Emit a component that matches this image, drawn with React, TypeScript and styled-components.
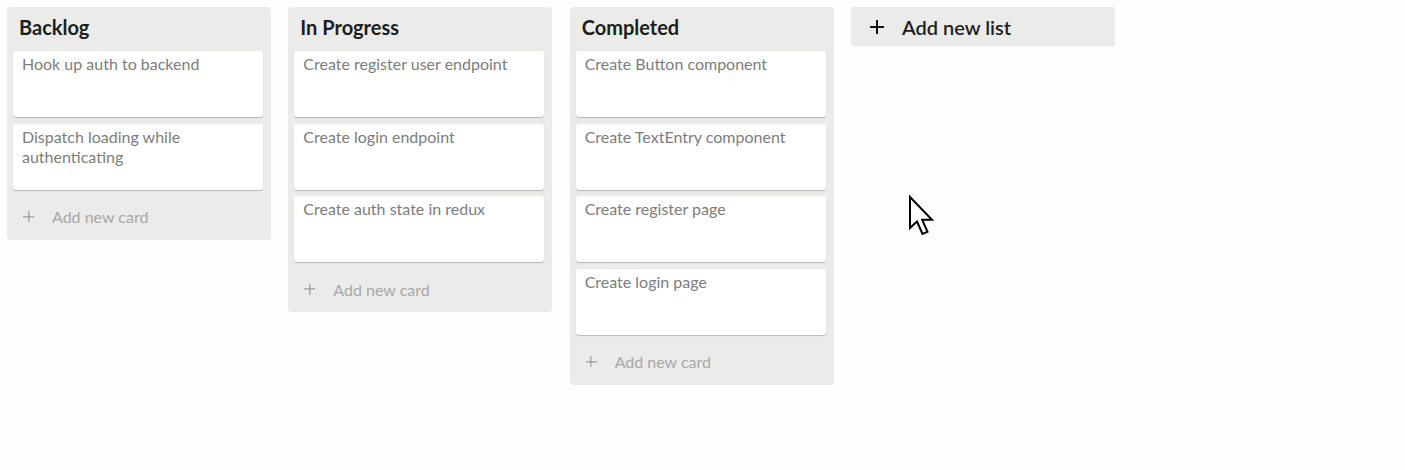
import React from "react";
import styled, { createGlobalStyle } from "styled-components";

const Global = createGlobalStyle`
  html, body { margin: 0; padding: 0; background: #fdfdfb; }
  body { font-family: "Source Sans Pro", Lato, "Noto Sans", sans-serif; }
`;

const Board = styled.div`
  position: relative;
  display: flex;
  align-items: flex-start;
  gap: 17.33px;
  padding: 7px;
  height: 456px;
`;

const List = styled.section`
  width: 264px;
  flex: 0 0 264px;
  background: #ebebe9;
  border-radius: 4px;
  padding: 0 8px 0 6px;
  box-sizing: border-box;
`;

const ListTitle = styled.h2`
  margin: 0;
  height: 44px;
  padding: 8px 0 0 6px;
  box-sizing: border-box;
  font-size: 20px;
  font-weight: 700;
  line-height: 24px;
  color: #1e1e1e;
`;

const Cards = styled.div`
  display: flex;
  flex-direction: column;
  gap: 6.6px;
`;

const Card = styled.div`
  height: 66px;
  box-sizing: border-box;
  background: #ffffff;
  border-radius: 3px;
  box-shadow: 0 1px 1px rgba(0, 0, 0, 0.22);
  padding: 3px 9px;
  font-size: 16px;
  line-height: 20px;
  color: #7d7d7d;
`;

const AddCard = styled.div`
  height: 50px;
  display: flex;
  align-items: center;
  padding: 4px 0 0 10px;
  box-sizing: border-box;
  font-size: 16px;
  color: #a8a8a6;
`;

const Plus = styled.span<{ $size: number; $color: string; $thick: number }>`
  display: inline-block;
  width: ${(p) => p.$size}px;
  height: ${(p) => p.$size}px;
  position: relative;
  margin-right: 18px;
  &::before, &::after {
    content: "";
    position: absolute;
    background: ${(p) => p.$color};
  }
  &::before { left: 0; right: 0; top: 50%; height: ${(p) => p.$thick}px; transform: translateY(-50%); }
  &::after { top: 0; bottom: 0; left: 50%; width: ${(p) => p.$thick}px; transform: translateX(-50%); }
`;

const AddList = styled.div`
  width: 264px;
  flex: 0 0 264px;
  height: 39px;
  box-sizing: border-box;
  background: #ebebe9;
  border-radius: 3px 0 0 3px;
  display: flex;
  align-items: center;
  padding: 0 0 0 19px;
  font-size: 20px;
  font-weight: 600;
  color: #1e1e1e;
`;

const Cursor = styled.svg`
  position: absolute;
  left: 907px;
  top: 194px;
`;

const data = [
  { title: "Backlog", cards: ["Hook up auth to backend", "Dispatch loading while authenticating"] },
  { title: "In Progress", cards: ["Create register user endpoint", "Create login endpoint", "Create auth state in redux"] },
  { title: "Completed", cards: ["Create Button component", "Create TextEntry component", "Create register page", "Create login page"] },
];

export default function App() {
  return (
    <>
      <Global />
      <Board>
        {data.map((l) => (
          <List key={l.title}>
            <ListTitle>{l.title}</ListTitle>
            <Cards>
              {l.cards.map((c) => (
                <Card key={c}>{c}</Card>
              ))}
            </Cards>
            <AddCard>
              <Plus $size={11} $color="#8a8a88" $thick={1.3} />
              Add new card
            </AddCard>
          </List>
        ))}
        <AddList>
          <Plus $size={14} $color="#111" $thick={2} />
          Add new list
        </AddList>
        <Cursor width="30" height="46" viewBox="0 0 30 46">
          <path d="M3 3 L3 34 L10 27.5 L15.5 40 L20.5 37.8 L15.2 25.8 L25 25.8 Z" fill="#fff" stroke="#000" strokeWidth="2" strokeLinejoin="miter" />
        </Cursor>
      </Board>
    </>
  );
}
